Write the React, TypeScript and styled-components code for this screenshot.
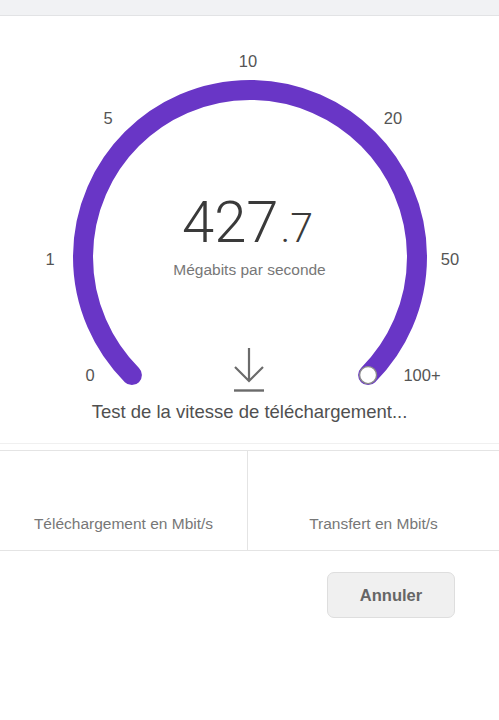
import styled, { createGlobalStyle } from "styled-components";

const GlobalStyle = createGlobalStyle`
  body {
    margin: 0;
    background: #fff;
    font-family: "Liberation Sans", Arial, sans-serif;
  }
`;

const PURPLE = "#6936c6";

// gauge geometry (svg coords)
const CX = 250;
const CY = 241;
const R = 167;

const ticks = [
  { label: "10", x: 248, y: 45 },
  { label: "5", x: 108, y: 102 },
  { label: "20", x: 393, y: 102 },
  { label: "1", x: 50, y: 243 },
  { label: "50", x: 450, y: 243 },
  { label: "0", x: 90, y: 359 },
  { label: "100+", x: 422, y: 359 },
];

const polar = (deg: number) => {
  const a = (deg * Math.PI) / 180;
  return { x: CX + R * Math.sin(a), y: CY - R * Math.cos(a) };
};

const App = () => {
  const start = polar(225);
  const end = polar(135);

  return (
    <>
      <GlobalStyle />
      <Page>
        <TopBar />

        <GaugeWrap>
          <svg width="499" height="384" viewBox="0 0 499 384">
            <path
              d={`M ${start.x} ${start.y} A ${R} ${R} 0 1 1 ${end.x} ${end.y}`}
              fill="none"
              stroke={PURPLE}
              strokeWidth={20}
              strokeLinecap="round"
            />
            <circle cx={end.x} cy={end.y} r={8.5} fill="#fff" stroke="#8a8a8a" strokeWidth={1.4} />
            {ticks.map((t) => (
              <TickText key={t.label} x={t.x} y={t.y} textAnchor="middle" dominantBaseline="central">
                {t.label}
              </TickText>
            ))}
          </svg>

          <Readout>
            <Speed>
              427<Decimal>.7</Decimal>
            </Speed>
            <Unit>Mégabits par seconde</Unit>
          </Readout>

          {/* icône de téléchargement */}
          <DownloadIcon width="34" height="48" viewBox="0 0 34 48">
            <path d="M17 2 V35 M3 21 L17 35 L31 21" fill="none" stroke="#6b6b6b" strokeWidth="2.2" />
            <path d="M2 44.5 H32" stroke="#6b6b6b" strokeWidth="2.4" />
          </DownloadIcon>
        </GaugeWrap>

        <Status>Test de la vitesse de téléchargement...</Status>

        <ResultTable>
          <ResultCell>Téléchargement en Mbit/s</ResultCell>
          <ResultCell $last>Transfert en Mbit/s</ResultCell>
        </ResultTable>

        <Actions>
          <CancelBtn type="button">Annuler</CancelBtn>
        </Actions>
      </Page>
    </>
  );
};

export default App;

/* styled */
const Page = styled.div`
  width: 499px;
  height: 720px;
  background: #fff;
`;
const TopBar = styled.div`
  height: 15px;
  background: #f1f2f4;
  border-bottom: 1px solid #e2e3e5;
`;
const GaugeWrap = styled.div`
  position: relative;
  height: 384px;
  svg {
    display: block;
  }
`;
const TickText = styled.text`
  font-family: "Liberation Sans", Arial, sans-serif;
  font-size: 16.5px;
  fill: #555;
`;
const Readout = styled.div`
  position: absolute;
  left: 0;
  right: 0;
  top: 175px;
  display: flex;
  flex-direction: column;
  align-items: center;
`;
const Speed = styled.div`
  font-family: Roboto, "Liberation Sans", sans-serif;
  font-weight: 300;
  font-size: 58px;
  line-height: 62px;
  color: #3a3a3a;
  margin-left: -4px;
`;
const Decimal = styled.span`
  font-size: 41px;
  margin-left: 2px;
`;
const Unit = styled.div`
  margin-top: 2px;
  font-size: 15.5px;
  color: #777;
`;
const DownloadIcon = styled.svg`
  position: absolute;
  left: 232px;
  top: 330px;
`;
const Status = styled.div`
  height: 44px;
  padding-top: 1px;
  box-sizing: border-box;
  text-align: center;
  font-size: 18.5px;
  color: #505050;
  line-height: 22px;
  border-bottom: 1px solid #f0f0f0;
`;
const ResultTable = styled.div`
  margin-top: 6px;
  display: grid;
  grid-template-columns: 248px 1fr;
  height: 101px;
  border-top: 1px solid #e4e4e4;
  border-bottom: 1px solid #e4e4e4;
  box-sizing: border-box;
`;
const ResultCell = styled.div<{ $last?: boolean }>`
  display: flex;
  align-items: flex-end;
  justify-content: center;
  padding-bottom: 17px;
  font-size: 15.5px;
  color: #777;
  border-right: ${(p) => (p.$last ? "none" : "1px solid #e4e4e4")};
`;
const Actions = styled.div`
  display: flex;
  justify-content: flex-end;
  padding: 21px 44px 0 0;
`;
const CancelBtn = styled.button`
  width: 128px;
  height: 46px;
  border: 1px solid #dedede;
  border-radius: 7px;
  background: #f0f0f0;
  font-family: "Liberation Sans", Arial, sans-serif;
  font-size: 16.5px;
  font-weight: 600;
  color: #666;
  cursor: pointer;
`;
